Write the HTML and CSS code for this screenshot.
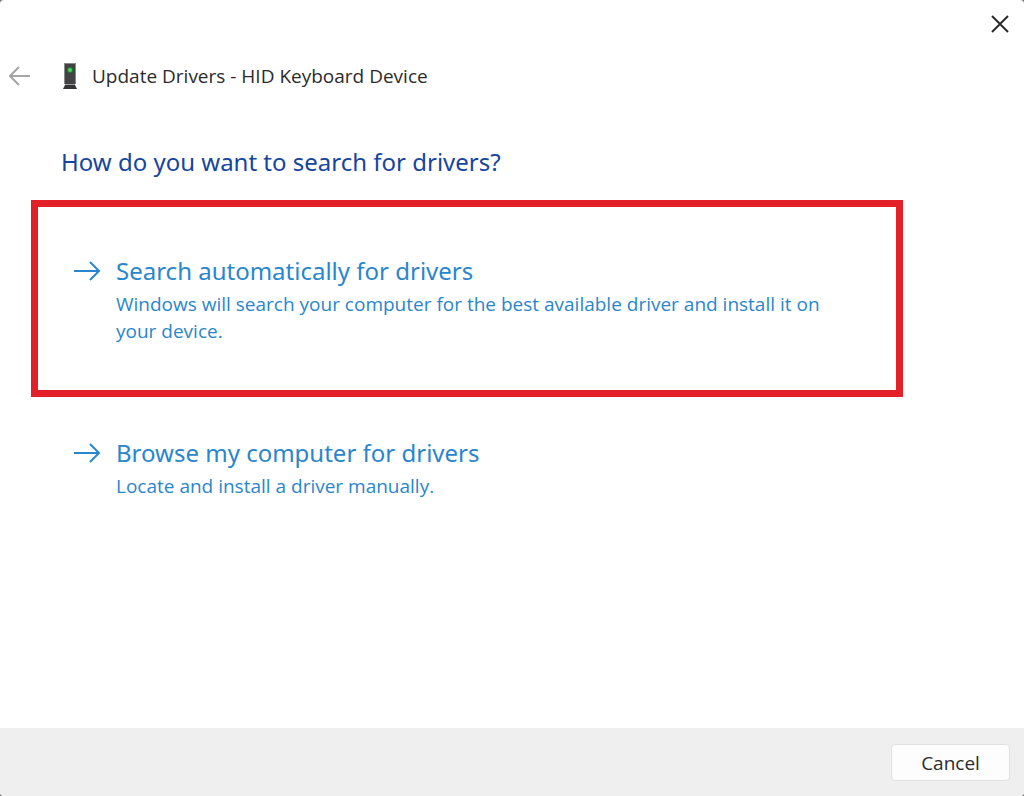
FILE: index.html
```html
<!DOCTYPE html>
<html lang="en">
<head>
  <meta charset="UTF-8">
  <meta name="viewport" content="width=device-width, initial-scale=1.0">
  <title>Update Drivers - HID Keyboard Device</title>
  <link rel="stylesheet" href="styles.css">
</head>
<body>
  <div class="dialog">
    <div class="titlebar">
      <button class="close" type="button" aria-label="Close">
        <svg width="18" height="18" viewBox="0 0 18 18"><path d="M1 1l16 16M17 1L1 17"/></svg>
      </button>
    </div>

    <header class="header">
      <button class="back" type="button" aria-label="Back">
        <svg width="22" height="20" viewBox="0 0 22 20"><path d="M21 10H2M10 1L1 10l9 9"/></svg>
      </button>
      <svg class="device" width="16" height="26" viewBox="0 0 16 26">
        <path d="M2 0h12v21H2z" fill="#8a8a8a"/>
        <path d="M3 1h10v20H3z" fill="#424244"/>
        <path d="M3 22h10l2 4H1z" fill="#353537"/>
        <path d="M3 21h10v1H3z" fill="#a0a0a0"/>
        <circle cx="8" cy="7" r="3" fill="#267a2c"/>
        <circle cx="8" cy="7" r="2" fill="#4fd257"/>
      </svg>
      <span class="caption">Update Drivers - HID Keyboard Device</span>
    </header>

    <main class="content">
      <h1>How do you want to search for drivers?</h1>

      <a class="option highlighted" href="#auto">
        <svg class="arrow" width="28" height="20" viewBox="0 0 28 20"><path d="M1 10h25M17 1l9 9-9 9"/></svg>
        <span class="text">
          <span class="name">Search automatically for drivers</span>
          <span class="desc">Windows will search your computer for the best available driver and install it on your device.</span>
        </span>
      </a>

      <a class="option" href="#browse">
        <svg class="arrow" width="28" height="20" viewBox="0 0 28 20"><path d="M1 10h25M17 1l9 9-9 9"/></svg>
        <span class="text">
          <span class="name">Browse my computer for drivers</span>
          <span class="desc">Locate and install a driver manually.</span>
        </span>
      </a>
    </main>

    <footer class="footer">
      <button class="cancel" type="button">Cancel</button>
    </footer>
  </div>
</body>
</html>
```
FILE: styles.css
```css
* {
  box-sizing: border-box;
}

body {
  margin: 0;
  background: #777;
  font-family: "Open Sans", "Noto Sans", sans-serif;
  color: #2b2b2b;
}

svg {
  display: block;
  flex: none;
}

svg path {
  stroke-width: 2;
}

button {
  font: inherit;
  color: inherit;
  cursor: pointer;
}

.dialog {
  display: flex;
  flex-direction: column;
  min-height: 100vh;
  background: #fff;
  border-radius: 4px;
  overflow: hidden;
}

.titlebar {
  display: flex;
  justify-content: flex-end;
  height: 48px;
}

.close,
.back {
  display: flex;
  align-items: center;
  border: 0;
  background: none;
  fill: none;
}

.close {
  padding: 0 15px;
  stroke: #2b2b2b;
}

.back {
  padding: 0 8px 0 9px;
  stroke: #a6a6a6;
}

.header {
  display: flex;
  align-items: center;
  height: 56px;
}

.device {
  margin-left: 23px;
}

.caption {
  margin-left: 14px;
  font-size: 19px;
}

.content {
  flex: 1;
  padding: 40px 121px 40px 31px;
}

h1 {
  margin: 0 0 20px 30px;
  font-family: "Noto Sans", "Open Sans", sans-serif;
  font-size: 24px;
  font-weight: 400;
  line-height: 36px;
  color: #17459c;
}

.option {
  display: flex;
  gap: 15px;
  padding: 28px 35px;
  color: #2a86cc;
  text-decoration: none;
  border: 7px solid transparent;
}

.highlighted {
  padding: 43px 35px 45px;
  border-color: #e32028;
}

.arrow {
  margin-top: 11px;
  fill: none;
  stroke: #2a86cc;
}

.name,
.desc {
  display: block;
}

.name {
  font-family: "Noto Sans", "Open Sans", sans-serif;
  font-size: 24px;
  line-height: 41px;
}

.desc {
  font-size: 19px;
  line-height: 27px;
}

.footer {
  display: flex;
  justify-content: flex-end;
  padding: 16px 14px 15px;
  background: #efefef;
}

.cancel {
  width: 119px;
  height: 37px;
  padding: 0;
  border: 1px solid #e0e0e0;
  border-radius: 4px;
  background: #fdfdfd;
  font-size: 19px;
}
```
